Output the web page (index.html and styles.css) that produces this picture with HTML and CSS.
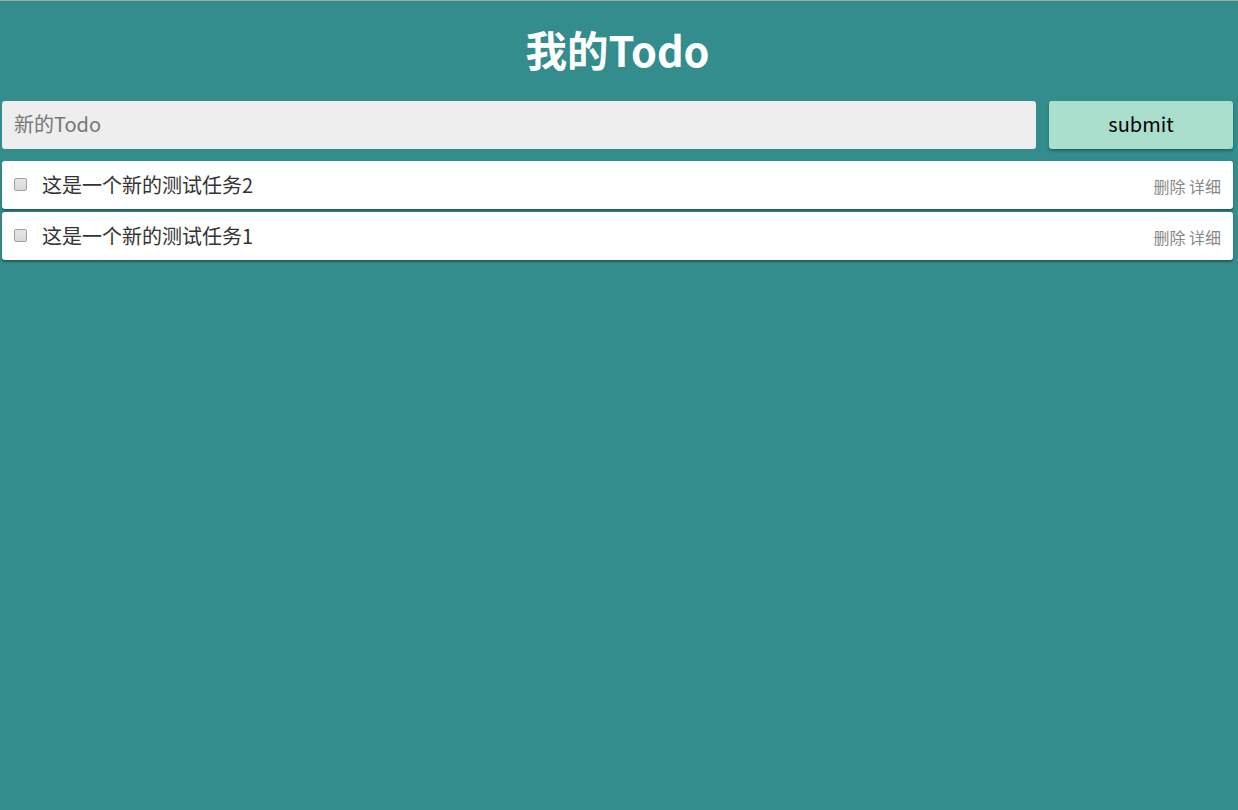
FILE: index.html
```html
<!DOCTYPE html>
<html lang="zh-CN">
<head>
<meta charset="utf-8">
<title>我的Todo</title>
<link rel="stylesheet" href="styles.css">
</head>
<body>
<div class="app">
  <header class="header"><h1 class="title">我的Todo</h1></header>
  <form class="form">
    <input class="input" type="text" placeholder="新的Todo">
    <button class="submit" type="button">submit</button>
  </form>
  <ul class="list">
    <li class="item">
      <input class="check" type="checkbox">
      <span class="text">这是一个新的测试任务2</span>
      <span class="actions"><a class="act">删除</a> <a class="act">详细</a></span>
    </li>
    <li class="item">
      <input class="check" type="checkbox">
      <span class="text">这是一个新的测试任务1</span>
      <span class="actions"><a class="act">删除</a> <a class="act">详细</a></span>
    </li>
  </ul>
</div>
</body>
</html>
```
FILE: styles.css
```css
html, body {
  margin: 0;
  padding: 0;
  height: 100%;
}
body {
  background: #338d8d;
  border-top: 1px solid #a9a9a9;
  box-sizing: border-box;
  font-family: "Noto Sans CJK SC", "Noto Sans", sans-serif;
}
.app {
  padding: 0 5px 0 2px;
}
.header {
  height: 100px;
  display: flex;
  align-items: center;
  justify-content: center;
  padding-bottom: 2px;
  box-sizing: border-box;
}
.title {
  margin: 0;
  color: #fff;
  font-size: 41.5px;
  font-weight: 700;
  line-height: 1;
}
.form {
  display: flex;
  gap: 13px;
  margin: 0;
}
.input {
  flex: 1;
  height: 48px;
  box-sizing: border-box;
  border: none;
  border-radius: 3px;
  background: #eeeeee;
  padding: 0 12px 3px;
  font-family: inherit;
  font-size: 20px;
  color: #333;
  outline: none;
}
.input::placeholder {
  color: #777;
}
.submit {
  width: 184px;
  height: 48px;
  border: none;
  border-radius: 3px;
  background: #aadecd;
  box-shadow: 0 2px 3px rgba(0,0,0,0.3);
  font-family: inherit;
  font-size: 20px;
  color: #000;
  padding: 0 0 4px;
}
.list {
  list-style: none;
  margin: 12px 0 0;
  padding: 0;
  display: flex;
  flex-direction: column;
  gap: 3px;
}
.item {
  height: 48px;
  display: flex;
  align-items: center;
  background: #fff;
  border-radius: 3px;
  box-shadow: 0 2px 2px rgba(0,0,0,0.35);
  padding: 0 12px 0 12px;
  box-sizing: border-box;
}
.check {
  appearance: none;
  -webkit-appearance: none;
  width: 13px;
  height: 13px;
  margin: 0 0 1px 0;
  box-sizing: border-box;
  border: 1px solid #a0a0a0;
  border-radius: 2px;
  background: linear-gradient(#e6e6e6, #d8d8d8);
}
.text {
  margin-left: 15px;
  font-size: 20px;
  color: #333;
  flex: 1;
  line-height: 1;
}
.actions {
  font-size: 16px;
  color: #888;
  line-height: 1;
  padding-top: 2px;
}
.act {
  color: #888;
}
```
